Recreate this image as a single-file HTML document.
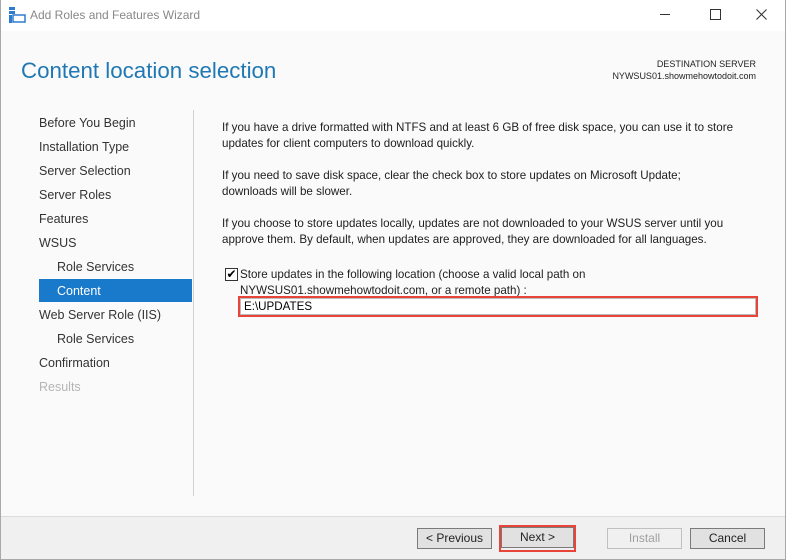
<!DOCTYPE html>
<html><head><style>
*{margin:0;padding:0;box-sizing:border-box}
body{width:786px;height:560px;overflow:hidden;background:#fafafa;font-family:"Liberation Sans",sans-serif;position:relative}
.abs{position:absolute;white-space:nowrap}
.tb{position:absolute;left:0;top:0;width:786px;height:31px;background:#fff}
.nav{position:absolute;font-size:12.5px;color:#333;left:39px}
.p{position:absolute;left:222px;font-size:11.6px;color:#1e1e1e;line-height:16px}
.btn{position:absolute;top:528px;height:21px;border:1px solid #7a7a7a;background:#e1e1e1;font-size:12px;text-align:center;line-height:19px;color:#222}
</style></head><body>
<div class="tb"></div>
<svg class="abs" style="left:9px;top:7px" width="17" height="16"><rect x="0" y="0" width="6" height="3" fill="#2e7bcf"/><rect x="0" y="4" width="6" height="3" fill="#2e7bcf"/><rect x="0" y="8" width="3" height="8" fill="#2e7bcf"/><rect x="4" y="8" width="12" height="7" fill="none" stroke="#2e7bcf" stroke-width="1.5"/></svg>
<div class="abs" style="left:30px;top:8px;font-size:12px;color:#888">Add Roles and Features Wizard</div>
<div class="abs" style="left:660px;top:14px;width:10px;height:1px;background:#333"></div>
<div class="abs" style="left:710px;top:9px;width:11px;height:11px;border:1px solid #333"></div>
<svg class="abs" style="left:756px;top:9px" width="11" height="11"><path d="M0.5 0.5L10.5 10.5M10.5 0.5L0.5 10.5" stroke="#333" stroke-width="1.1"/></svg>
<div class="abs" style="left:21px;top:58px;font-size:22.3px;color:#1f78b4">Content location selection</div>
<div class="abs" style="right:30px;top:58px;font-size:9px;color:#222;text-align:right;line-height:12px">DESTINATION SERVER<br>NYWSUS01.showmehowtodoit.com</div>
<div class="nav" style="top:116px">Before You Begin</div>
<div class="nav" style="top:140px">Installation Type</div>
<div class="nav" style="top:164px">Server Selection</div>
<div class="nav" style="top:188px">Server Roles</div>
<div class="nav" style="top:212px">Features</div>
<div class="nav" style="top:236px">WSUS</div>
<div class="nav" style="top:260px;left:57px">Role Services</div>
<div class="abs" style="left:39px;top:279px;width:153px;height:23px;background:#1979ca"></div>
<div class="nav" style="top:284px;left:57px;color:#fff">Content</div>
<div class="nav" style="top:308px">Web Server Role (IIS)</div>
<div class="nav" style="top:332px;left:57px">Role Services</div>
<div class="nav" style="top:356px">Confirmation</div>
<div class="nav" style="top:380px;color:#b5b5b5">Results</div>
<div class="abs" style="left:193px;top:110px;width:1px;height:386px;background:#d0d0d0"></div>
<div class="p" style="top:120px">If you have a drive formatted with NTFS and at least 6 GB of free disk space, you can use it to store<br>updates for client computers to download quickly.</div>
<div class="p" style="top:168px">If you need to save disk space, clear the check box to store updates on Microsoft Update;<br>downloads will be slower.</div>
<div class="p" style="top:216px">If you choose to store updates locally, updates are not downloaded to your WSUS server until you<br>approve them. By default, when updates are approved, they are downloaded for all languages.</div>
<div class="abs" style="left:225px;top:268px;width:13px;height:13px;border:1px solid #333;background:#fff;font-size:12px;line-height:11px;text-align:center">✔</div>
<div class="p" style="top:267px;left:240px">Store updates in the following location (choose a valid local path on<br>NYWSUS01.showmehowtodoit.com, or a remote path) :</div>
<div class="abs" style="left:238px;top:296px;width:520px;height:21px;border:2px solid #e8443a;background:#fff"><div style="border:1px solid #bbb;height:100%;font-size:11.6px;line-height:15px;padding-left:3px">E:\UPDATES</div></div>
<div class="abs" style="left:0;top:516px;width:786px;height:44px;background:#f0f0f0;border-top:1px solid #dcdcdc"></div>
<div class="btn" style="left:417px;width:75px">&lt; Previous</div>
<div class="abs" style="left:499px;top:525px;width:77px;height:27px;border:2px solid #e8443a"></div>
<div class="btn" style="left:501px;width:73px;top:527px">Next &gt;</div>
<div class="btn" style="left:607px;width:75px;color:#a0a0a0;border-color:#c0c0c0;background:#f0f0f0">Install</div>
<div class="btn" style="left:690px;width:75px">Cancel</div>
<div class="abs" style="left:0;top:0;width:786px;height:560px;border:1px solid #a9a9a9;border-top:none"></div>
</body></html>
